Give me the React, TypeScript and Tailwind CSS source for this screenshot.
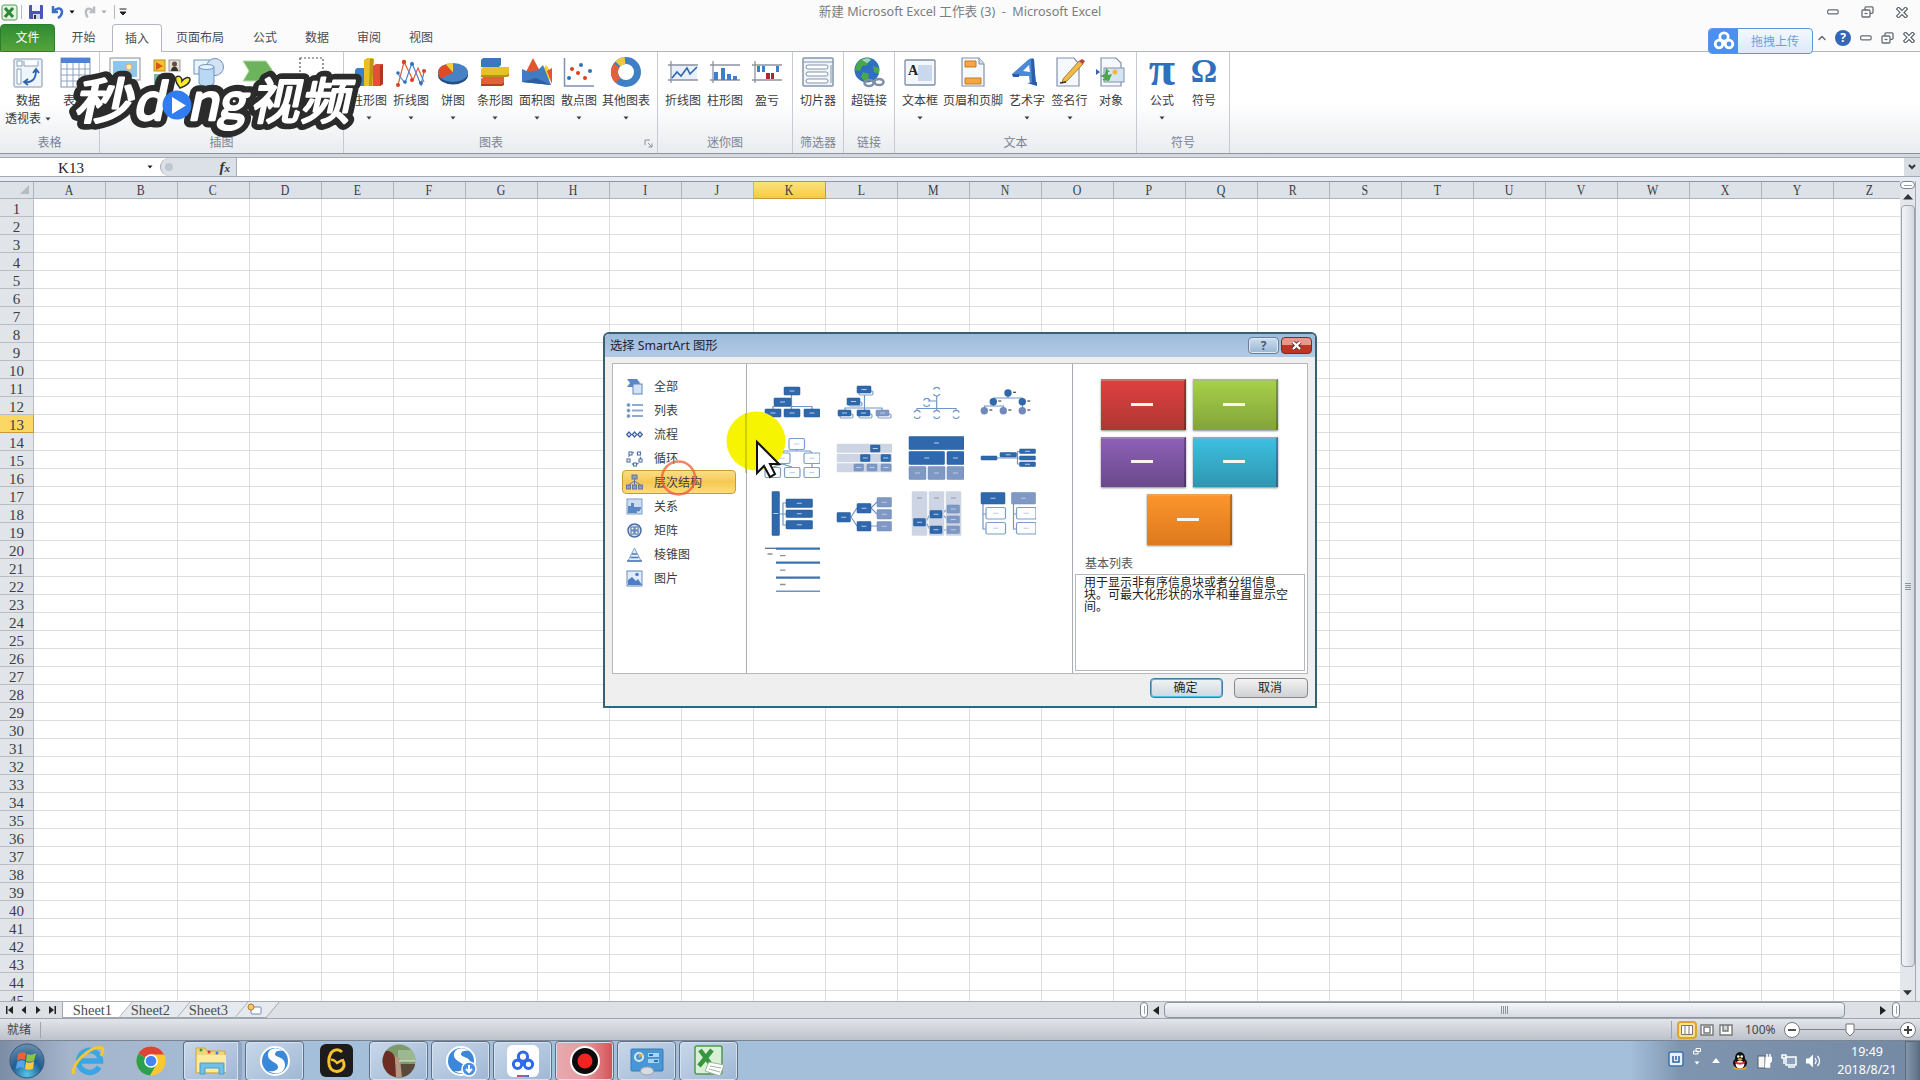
import React from 'react';
import { ChevronUp } from 'lucide-react';

const ui = "font-['Noto_Sans','Noto_Sans_CJK_SC',sans-serif]";
const serif = "font-['Liberation_Serif','Noto_Sans_CJK_SC',serif]";

const columns = 'ABCDEFGHIJKLMNOPQRSTUVWXYZ'.split('');
const rows = Array.from({ length: 45 }, (_, i) => i + 1);

/* ---------- small shared pieces ---------- */

const Caret = ({ className = '' }: { className?: string }) => (
  <svg className={className} width="6" height="4" viewBox="0 0 6 4">
    <path d="M0.5 0.5h5L3 3.5z" fill="currentColor" />
  </svg>
);

const MinIcon = () => (
  <svg width="12" height="6" viewBox="0 0 12 6" fill="#fff" stroke="#666c74" strokeWidth="1.2">
    <rect x="0.7" y="0.8" width="10.4" height="4" rx="1" />
  </svg>
);

const RestoreIcon = () => (
  <svg width="13" height="12" viewBox="0 0 13 12" fill="#fff" stroke="#666c74" strokeWidth="1.3">
    <rect x="4" y="0.8" width="8" height="6.5" rx="1" />
    <rect x="1" y="4" width="8" height="7" rx="1" />
    <path d="M3.5 7.5h3" />
  </svg>
);

const CloseIcon = () => (
  <svg width="12" height="11" viewBox="0 0 12 11">
    <path d="M2.5 2l7 7M9.5 2l-7 7" stroke="#5d636b" strokeWidth="4" strokeLinecap="square" />
    <path d="M2.5 2l7 7M9.5 2l-7 7" stroke="#fff" strokeWidth="1.7" strokeLinecap="square" />
  </svg>
);

/* ---------- ribbon icons, all on a 32x32 grid ---------- */

const icons: Record<string, React.ReactNode> = {
  pivot: (
    <g>
      <rect x="2" y="2" width="28" height="28" rx="1" fill="#eef5fb" stroke="#8293a8" />
      <rect x="5" y="4" width="5" height="5" fill="#fff" stroke="#8aa0b8" />
      <path d="M12 4v5h14V4M5 12h4v15H5z" fill="#fff" stroke="#8aa0b8" />
      <path d="M13 25c8 1 11-4 11-12m-3 3l3-4 3 4m-11 6l-4 3 4 3" fill="none" stroke="#2f63ad" strokeWidth="1.8" />
    </g>
  ),
  table: (
    <g>
      <rect x="2" y="1" width="29" height="29" fill="#fff" stroke="#8293a8" />
      <rect x="2" y="1" width="29" height="5" fill="#4f83cf" />
      <path d="M2 12h29M2 18h29M2 24h29M8 6v24M14 6v24M20 6v24M26 6v24" stroke="#8ea3c0" />
    </g>
  ),
  picture: (
    <g>
      <rect x="1" y="1" width="30" height="22" fill="#f7f9fb" stroke="#8c9097" />
      <rect x="4" y="4" width="24" height="16" fill="#8cc6ec" />
      <circle cx="20" cy="10" r="3" fill="#fff0a8" stroke="#f0a860" />
    </g>
  ),
  clipart: (
    <g>
      <rect x="3" y="3" width="11" height="11" fill="#f7c52b" stroke="#b98c20" />
      <path d="M5 5l7 4-7 4z" fill="#d9541f" />
      <rect x="18" y="3" width="11" height="11" fill="#e6dcd2" stroke="#999" />
      <circle cx="23.500" cy="7" r="2.500" fill="#6a4d3c" />
      <path d="M20 14c0-6 7-6 7 0z" fill="#333" />
      <rect x="3" y="17" width="11" height="11" fill="#77b9a0" />
    </g>
  ),
  shapes: (
    <g stroke="#6c93bf">
      <rect x="1" y="3" width="16" height="14" fill="#eaf2fa" />
      <circle cx="22" cy="10" r="8.500" fill="#d4e3f3" />
      <path d="M6 10v16c0 4 15 4 15 0V10z" fill="#b8d8f3" />
      <ellipse cx="13.500" cy="10" rx="7.500" ry="2.500" fill="#e6f3fc" />
    </g>
  ),
  smartart: <path d="M1 4h23l7 10-7 10H1l6-10z" fill="#6db35c" stroke="#b5dca8" />,
  screenshot: (
    <rect x="4" y="1" width="23" height="28" fill="none" stroke="#555" strokeWidth="1.2" strokeDasharray="2 2" />
  ),
  column: (
    <g>
      <path d="M2 13l2-2h7v18H2z" fill="#3d7fca" />
      <path d="M11 3l3-2h6v28h-9z" fill="#e9bf28" />
      <path d="M17 2h4l-2 27h-3z" fill="#bf931b" />
      <path d="M20 9l3-2h7v20l-3 2h-7z" fill="#e25137" />
      <path d="M27 9l3-2v20l-3 2z" fill="#b23520" />
    </g>
  ),
  line: (
    <g fill="none" strokeWidth="1.2">
      <path d="M3 28L9 5l9 18 5-12 6 14" stroke="#e0603c" />
      <path d="M3 17l7 9 7-20 9 22 3-13" stroke="#4d88c9" />
      <g stroke="none" fill="#d8401f">
        <circle cx="3" cy="28" r="2" /><circle cx="9" cy="5" r="2.200" /><circle cx="17" cy="23" r="2" /><circle cx="29" cy="14" r="2" />
      </g>
      <g stroke="none" fill="#3071b8">
        <circle cx="3" cy="16" r="1.800" /><circle cx="10" cy="25" r="1.800" /><circle cx="17" cy="7" r="2" /><circle cx="26" cy="26" r="2" />
      </g>
    </g>
  ),
  pie: (
    <g>
      <ellipse cx="16" cy="18" rx="15" ry="9.500" fill="#244d86" />
      <ellipse cx="16" cy="15.500" rx="15" ry="9.500" fill="#4682c4" />
      <path d="M16 15.500L4 21.500C-1 16 1 9 9 7.500z" fill="#e04a25" />
      <path d="M16 15.500L9 7.500c2-1.200 4-1.600 7-1.600z" fill="#f2cf3e" />
    </g>
  ),
  bar: (
    <g>
      <path d="M2 3l2-2h18v7l-2 2H2z" fill="#3a77bd" />
      <path d="M2 12l2-2h26v7l-2 2H2z" fill="#e8bf2c" />
      <path d="M2 18h26l2-2v3l-2 1H2z" fill="#b98f1b" />
      <path d="M2 22l2-2h21v6l-2 3H2z" fill="#e2603d" />
      <path d="M2 27h21l2-2v3l-2 1H2z" fill="#b5401f" />
    </g>
  ),
  area: (
    <g>
      <path d="M5 15l7-14 9 17z" fill="#e2552d" />
      <path d="M21 14l4-6 6 8v10z" fill="#f0cf3a" />
      <path d="M26 14l5-3v16z" fill="#e2552d" />
      <path d="M1 12l7 3 9-2 5-5 8 20-29-3z" fill="#3f7cc2" />
      <path d="M1 25l14-4 15 7z" fill="#2c5f9f" />
    </g>
  ),
  scatter: (
    <g>
      <path d="M1.500 1v28H31" fill="none" stroke="#7c93b0" strokeWidth="1.500" />
      <g fill="#d8401f"><circle cx="9" cy="12" r="2" /><circle cx="15" cy="16" r="2" /><circle cx="22" cy="21" r="2" /></g>
      <g fill="#3071b8"><circle cx="18" cy="8" r="2" /><circle cx="27" cy="14" r="2" /><circle cx="6" cy="21" r="2" /></g>
    </g>
  ),
  donut: (
    <g fill="none" strokeWidth="7">
      <circle cx="16" cy="15" r="11.500" stroke="#3f80c4" />
      <path d="M8 23.500A11.500 11.500 0 0 1 6.500 8.500" stroke="#e2603d" />
      <path d="M8 7A11.500 11.500 0 0 1 15 3.500" stroke="#f0c93c" />
    </g>
  ),
  sparkLine: (
    <g fill="none">
      <rect x="4" y="7" width="26" height="16" fill="#e8f1fb" />
      <path d="M1 8h30M1 23h30M4 4v22" stroke="#8d949e" strokeWidth="1.300" />
      <path d="M5 21l5-6 4 4 6-8 3 6 7-7" stroke="#2f62ad" strokeWidth="1.600" />
    </g>
  ),
  sparkColumn: (
    <g>
      <path d="M1 8h30M4 4v22M1 23h30" stroke="#8d949e" strokeWidth="1.300" />
      <path d="M5 15h4v8H5zM12 11h4v12h-4zM18 17h4v6h-4zM24 19h4v4h-4z" fill="#3a80cf" />
    </g>
  ),
  winLoss: (
    <g>
      <path d="M1 8h30M4 4v22M1 23h30" stroke="#8d949e" strokeWidth="1.300" />
      <path d="M6 9h3v6H6zM11 9h3v6h-3zM25 9h3v6h-3z" fill="#3a80cf" />
      <path d="M15 16h4v6h-4zM20 16h3v6h-3z" fill="#b3262c" />
    </g>
  ),
  slicer: (
    <g stroke="#8495ab">
      <rect x="1" y="1" width="30" height="28" rx="1" fill="#f0f5fa" strokeWidth="1.500" />
      <path d="M1 5h30" />
      <g fill="#fff"><rect x="4" y="8" width="22" height="4" rx="2" /><rect x="4" y="15" width="22" height="4" rx="2" /><rect x="4" y="22" width="22" height="4" rx="2" /></g>
      <path d="M29 8v18" />
    </g>
  ),
  link: (
    <g>
      <circle cx="14" cy="13" r="12.500" fill="#2f6fc0" />
      <path d="M4 6c5-6 13-6 14-4l-4 6-5 1-2 5-5-1zM10 15l6 2-1 6-3 2-4-5zM20 9l6 2v6l-5-2z" fill="#4aa84a" />
      <path d="M9 3c3-2 7-2 9 0l-4 3z" fill="#c5e9f5" opacity="0.7" />
      <g fill="none" stroke="#7d8fa6" strokeWidth="2.500"><ellipse cx="16" cy="26" rx="4.500" ry="3" /><ellipse cx="26" cy="25" rx="4.500" ry="3" /></g>
    </g>
  ),
  textbox: (
    <g>
      <rect x="1" y="3" width="30" height="25" rx="1" fill="#f4f7fb" stroke="#7d8ea5" strokeWidth="1.300" />
      <rect x="14" y="8" width="14" height="16" fill="#c9d8ec" />
      <text x="4" y="18" fontSize="14" fontFamily="Liberation Serif" fontWeight="700" fill="#222">A</text>
    </g>
  ),
  headerFooter: (
    <g>
      <path d="M5 1h17l5 6v22H5z" fill="#f5f8fc" stroke="#8192aa" strokeWidth="1.200" />
      <path d="M22 1v6h5" fill="#d4deeb" stroke="#8192aa" />
      <path d="M8 4h11v6H8zM8 21h16v6H8z" fill="#f5a643" stroke="#c97d22" />
    </g>
  ),
  wordart: (
    <g>
      <path d="M1 17L18 2l4-1 3 25-6 1-1-8H8l-4 1z" fill="#4d8ad6" />
      <path d="M12 14l6-6 1 7z" fill="#fff" />
      <path d="M20 2l3 0 2 26-4-1z" fill="#2a5eaa" />
      <path d="M1 17l7 0 0 3-6 0zM16 26l10-1v4z" fill="#2a5eaa" />
    </g>
  ),
  signature: (
    <g>
      <path d="M3 1h17l5 6v22H3z" fill="#f5f8fc" stroke="#8192aa" strokeWidth="1.200" />
      <path d="M9 22L25 4l4 3L13 24l-5 2z" fill="#f3ba45" stroke="#8b6b2a" strokeWidth="0.800" />
      <path d="M25 4l3-2 3 2-2 3z" fill="#b8433b" />
      <path d="M6 26l6-1" stroke="#333" strokeWidth="1.500" />
    </g>
  ),
  object: (
    <g>
      <path d="M6 1h15l5 5v23H6z" fill="#f5f8fc" stroke="#8192aa" strokeWidth="1.200" />
      <rect x="9" y="11" width="20" height="14" fill="#d6e4f2" stroke="#8192aa" />
      <circle cx="20" cy="15" r="2.500" fill="#f0b93c" />
      <path d="M11 11l4 4-2 0v3l4-1-3 7-7-1 3-2-5-2 5-2z" fill="#4da64a" />
      <path d="M1 12l4 3-4 3z" fill="#3c5fb0" />
    </g>
  ),
};

interface Tool {
  icon: string;
  label: string;
  second?: string;
  w: string;
  caret?: boolean;
}

interface Group {
  name: string;
  w: string;
  pad: string;
  launcher?: boolean;
  tools: Tool[];
}

const groups: Group[] = [
  {
    name: '表格', w: 'w-[100px]', pad: 'pl-0.5',
    tools: [
      { icon: 'pivot', label: '数据', second: '透视表', w: 'w-[52px]' },
      { icon: 'table', label: '表格', w: 'w-[42px]', caret: true },
    ],
  },
  {
    name: '插图', w: 'w-[244px]', pad: 'pl-1',
    tools: [
      { icon: 'picture', label: '图片', w: 'w-[42px]' },
      { icon: 'clipart', label: '剪贴画', w: 'w-[41px]' },
      { icon: 'shapes', label: '形状', w: 'w-[43px]', caret: true },
      { icon: 'smartart', label: 'SmartArt', w: 'w-[56px]' },
      { icon: 'screenshot', label: '屏幕截图', w: 'w-[52px]', caret: true },
    ],
  },
  {
    name: '图表', w: 'w-[314px]', pad: 'pl-1', launcher: true,
    tools: [
      { icon: 'column', label: '柱形图', w: 'w-[42px]', caret: true },
      { icon: 'line', label: '折线图', w: 'w-[42px]', caret: true },
      { icon: 'pie', label: '饼图', w: 'w-[42px]', caret: true },
      { icon: 'bar', label: '条形图', w: 'w-[42px]', caret: true },
      { icon: 'area', label: '面积图', w: 'w-[42px]', caret: true },
      { icon: 'scatter', label: '散点图', w: 'w-[42px]', caret: true },
      { icon: 'donut', label: '其他图表', w: 'w-[52px]', caret: true },
    ],
  },
  {
    name: '迷你图', w: 'w-[135px]', pad: 'pl-1',
    tools: [
      { icon: 'sparkLine', label: '折线图', w: 'w-[42px]' },
      { icon: 'sparkColumn', label: '柱形图', w: 'w-[42px]' },
      { icon: 'winLoss', label: '盈亏', w: 'w-[42px]' },
    ],
  },
  { name: '筛选器', w: 'w-[51px]', pad: 'pl-1', tools: [{ icon: 'slicer', label: '切片器', w: 'w-[42px]' }] },
  { name: '链接', w: 'w-[51px]', pad: 'pl-1', tools: [{ icon: 'link', label: '超链接', w: 'w-[42px]' }] },
  {
    name: '文本', w: 'w-[242px]', pad: 'pl-1',
    tools: [
      { icon: 'textbox', label: '文本框', w: 'w-[42px]', caret: true },
      { icon: 'headerFooter', label: '页眉和页脚', w: 'w-[64px]' },
      { icon: 'wordart', label: '艺术字', w: 'w-[44px]', caret: true },
      { icon: 'signature', label: '签名行', w: 'w-[41px]', caret: true },
      { icon: 'object', label: '对象', w: 'w-[42px]' },
    ],
  },
  {
    name: '符号', w: 'w-[93px]', pad: 'pl-1',
    tools: [
      { icon: 'pi', label: '公式', w: 'w-[42px]', caret: true },
      { icon: 'omega', label: '符号', w: 'w-[42px]' },
    ],
  },
];

const glyphs: Record<string, string> = { pi: 'π', omega: 'Ω' };

const ToolButton = ({ tool }: { tool: Tool }) => (
  <div className={`flex shrink-0 flex-col items-center ${tool.w}`}>
    {glyphs[tool.icon] ? (
      <span
        className={`flex h-8 items-center font-['Liberation_Serif',serif] font-bold text-[#2f6fc0] ${
          tool.icon === 'pi' ? 'pb-2 text-[48px]' : 'pb-0.5 text-[33px]'
        }`}
      >
        {glyphs[tool.icon]}
      </span>
    ) : (
      <svg width="32" height="32" viewBox="0 0 32 32">{icons[tool.icon]}</svg>
    )}
    <span className="mt-[3px] whitespace-nowrap text-xs leading-[18px]">{tool.label}</span>
    {tool.second && (
      <span className="flex items-center gap-1 whitespace-nowrap text-xs leading-[18px]">
        {tool.second}
        <Caret />
      </span>
    )}
    {tool.caret && <Caret className="mt-[6px]" />}
  </div>
);

const Ribbon = () => (
  <div className="flex h-[101px] bg-gradient-to-b from-white from-50% to-[#e9ecf0] text-[#3a3d42]">
    {groups.map((g) => (
      <div key={g.name} className={`flex shrink-0 flex-col border-r border-[#c6cbd3] ${g.w}`}>
        <div className={`flex h-[81px] pt-[5px] ${g.pad}`}>
          {g.tools.map((t) => (
            <ToolButton key={t.icon} tool={t} />
          ))}
        </div>
        <div className="flex h-5 items-center text-xs text-[#7b8492]">
          <span className="flex-1 whitespace-nowrap text-center">{g.name}</span>
          {g.launcher && (
            <svg className="mr-1 ml-[6px]" width="9" height="9" viewBox="0 0 9 9" fill="none" stroke="#8a919b">
              <path d="M1 6V1h5M4 4l4 4M8 4.500V8H4.500" />
            </svg>
          )}
        </div>
      </div>
    ))}
  </div>
);

/* ---------- title and tabs ---------- */

const TitleBar = () => (
  <div className="flex h-6 items-center">
    <div className="flex w-[759px] items-center">
      <svg className="ml-px" width="17" height="17" viewBox="0 0 17 17">
        <rect x="1" y="1" width="15" height="15" rx="2" fill="#e4f2e2" stroke="#5c9a5c" />
        <path d="M4 4l8 9M12 4l-8 9" stroke="#2c8a35" strokeWidth="3" />
      </svg>
      <span className="ml-[3px] h-3.5 w-px bg-[#b5b9bf]" />
      <svg className="ml-1.5" width="16" height="16" viewBox="0 0 16 16">
        <rect x="1" y="1" width="14" height="14" rx="1" fill="#4a55b5" />
        <rect x="4" y="1" width="8" height="6" fill="#f2f5fb" />
        <rect x="5" y="10" width="7" height="5" fill="#cfd8ee" />
        <rect x="6" y="11" width="2" height="4" fill="#333" />
      </svg>
      <svg className="ml-[7px]" width="14" height="14" viewBox="0 0 14 14" fill="none" stroke="#3c6fc5" strokeWidth="2.500">
        <path d="M3 6c3-4 8-3 8 1 0 2-1 4-4 6M2 1v6h5" />
      </svg>
      <Caret className="ml-1 text-black" />
      <svg className="ml-2" width="13" height="14" viewBox="0 0 14 14" fill="none" stroke="#b9bcc1" strokeWidth="2.500">
        <path d="M11 6C8 2 3 3 3 7c0 2 1 4 2 6M12 1v6H7" />
      </svg>
      <Caret className="ml-[5px] text-[#a6a9ae]" />
      <span className="ml-[7px] h-3.5 w-px bg-[#b5b9bf]" />
      <svg className="ml-1" width="8" height="8" viewBox="0 0 8 8">
        <path d="M0.500 1h7M1 4h6L4 7z" stroke="#222" fill="#222" />
      </svg>
    </div>
    <div className="flex w-[402px] justify-center whitespace-nowrap text-[12.6px] text-[#7b7d80]">
      新建 Microsoft Excel 工作表 (3) &nbsp;-&nbsp; Microsoft Excel
    </div>
    <div className="ml-auto flex items-center gap-[22px] pr-3">
      <MinIcon />
      <RestoreIcon />
      <CloseIcon />
    </div>
  </div>
);

const tabs = [
  { name: '开始', w: 'w-[57px]' },
  { name: '插入', w: 'w-[50px]', active: true },
  { name: '页面布局', w: 'w-[76px]' },
  { name: '公式', w: 'w-[54px]' },
  { name: '数据', w: 'w-[50px]' },
  { name: '审阅', w: 'w-[54px]' },
  { name: '视图', w: 'w-[50px]' },
];

const Cloud = ({ color, size = 22 }: { color: string; size?: number }) => (
  <svg width={size} height={size} viewBox="0 0 22 22" fill="none" stroke={color} strokeWidth="2.800">
    <circle cx="11" cy="7" r="4.200" />
    <circle cx="6" cy="14" r="3.800" />
    <circle cx="16" cy="14" r="3.800" />
  </svg>
);

const TabBar = () => (
  <div className="flex h-7 text-xs text-[#4a4d52]">
    <div className="flex w-[55px] items-center justify-center rounded-t-sm border border-[#2d7d30] bg-gradient-to-b from-[#2f8b33] to-[#55a43a] text-white">
      文件
    </div>
    {tabs.map((t) => (
      <div
        key={t.name}
        className={`flex items-center justify-center pt-px ${t.w} ${
          t.active ? 'rounded-t border border-b-0 border-[#b3b8c0] bg-white' : 'border-b border-[#b3b8c0]'
        }`}
      >
        {t.name}
      </div>
    ))}
    <div className="flex flex-1 items-center justify-end border-b border-[#b3b8c0] pr-[5px]">
      <div className="relative top-[3px] mr-[3px] flex h-[26px] w-[105px] overflow-hidden rounded border border-[#5b97e0] bg-gradient-to-b from-[#f3f8fe] to-[#dce9fa]">
        <div className="flex w-[29px] items-center justify-center bg-[#4a90f0]">
          <Cloud color="#fff" />
        </div>
        <span className="flex flex-1 items-center justify-center pt-0.5 text-xs text-[#6d9fe0]">拖拽上传</span>
      </div>
      <ChevronUp className="h-3 w-3 text-[#666c74]" strokeWidth={3} />
      <div className="mr-[9px] ml-[7px] flex h-4 w-4 items-center justify-center rounded-full bg-[#3467b5] text-xs font-bold text-white">?</div>
      <div className="flex items-center gap-[9px]">
        <MinIcon />
        <RestoreIcon />
        <CloseIcon />
      </div>
    </div>
  </div>
);

const FormulaBar = () => (
  <div className="flex h-7 flex-col border-t border-[#8e949c] bg-[#d5d9df] pt-[3px]">
    <div className="flex h-5 border-y border-[#a5abb5] bg-white">
      <div className={`flex w-40 items-center pr-1.5 text-[#222] ${serif}`}>
        <span className="flex-1 pt-0.5 pr-1 text-center text-[15px] leading-none">K13</span>
        <Caret className="w-2" />
      </div>
      <div className="flex w-[77px] items-center justify-between rounded-l-full border border-y-0 border-[#a5abb5] bg-[#dce1e8] pr-1.5 pl-1">
        <span className="h-2 w-2 rounded-full bg-[#c0c6ce]" />
        <span className="font-['Liberation_Serif',serif] text-[15px] leading-none font-bold text-[#333] italic">
          f<span className="text-[11px]">x</span>
        </span>
      </div>
      <div className="flex-1" />
      <div className="flex w-4 items-center justify-center bg-[#d8dde4]">
        <svg width="8" height="6" viewBox="0 0 8 6" fill="none" stroke="#333" strokeWidth="2"><path d="M1 1l3 3 3-3" /></svg>
      </div>
    </div>
    <div className="flex-1 bg-[#e6ebf4]" />
  </div>
);

/* ---------- sheet grid ---------- */

const Grid = () => (
  <div className="flex h-[821px] overflow-hidden bg-white">
    <div className={`flex w-[1900px] flex-col ${serif}`}>
      <div className="flex h-[18px] shrink-0 overflow-hidden border-t border-[#9298a1] bg-[#dde2e8] text-[14px] text-[#3a3d42]">
        <div className="flex w-[34px] shrink-0 items-end justify-end border-r border-b border-[#aeb4bd] p-1">
          <svg width="9" height="9" viewBox="0 0 9 9"><path d="M9 0v9H0z" fill="#b6bcc4" /></svg>
        </div>
        {columns.map((c) => (
          <div
            key={c}
            className={`flex w-[72px] shrink-0 items-center justify-center border-r border-b pt-0.5 pr-px leading-none ${
              c === 'K' ? 'border-[#c9983a] bg-gradient-to-b from-[#fae27c] to-[#f7cb3e]' : 'border-[#aeb4bd]'
            }`}
          >
            <span className="scale-x-[.85]">{c}</span>
          </div>
        ))}
      </div>
      {rows.map((r) => (
        <div key={r} className="flex h-[18px] shrink-0">
          <div
            className={`flex w-[34px] shrink-0 items-center justify-center border-r border-b pt-[3px] text-[15px] leading-none text-[#3a3d42] ${
              r === 13 ? 'border-[#c9983a] bg-[#fad863]' : 'border-[#b9bec6] bg-[#e1e5ea]'
            }`}
          >
            {r}
          </div>
          {columns.map((c) => (
            <div key={c} className="w-[72px] shrink-0 border-r border-b border-[#dcdedf]" />
          ))}
        </div>
      ))}
    </div>
    <div className="flex w-4 flex-col items-center border-r border-[#a4aab3] bg-[#e3e7ec] text-[#333]">
      <div className="mb-[5px] flex h-2 w-[15px] shrink-0 items-center justify-center rounded-sm border border-[#7b828c] bg-white">
        <span className="h-px w-2 bg-[#9aa0a8]" />
      </div>
      <svg width="10" height="6" viewBox="0 0 10 6"><path d="M0 5.500h10L5 0z" fill="#333" /></svg>
      <div className="mt-[5px] flex h-[762px] w-3.5 flex-col items-center justify-center gap-px rounded-sm border border-[#9ca3ad] bg-gradient-to-r from-[#f3f5f8] to-[#d3d8e0]">
        <span className="h-px w-1.5 bg-[#8c939d]" />
        <span className="h-px w-1.5 bg-[#8c939d]" />
        <span className="h-px w-1.5 bg-[#8c939d]" />
        <span className="h-px w-1.5 bg-[#8c939d]" />
      </div>
      <svg className="mt-[23px]" width="9" height="6" viewBox="0 0 10 6"><path d="M0 0h10L5 5.500z" fill="#333" /></svg>
    </div>
    <div className="flex-1 bg-[#e6e9ef]" />
  </div>
);

const Split = () => (
  <div className="flex h-4 w-2 items-center justify-center rounded-sm border border-[#7b828c] bg-white">
    <span className="h-2 w-px bg-[#9aa0a8]" />
  </div>
);

const SheetTabs = () => (
  <div className="flex h-4 bg-[#dde1e6] outline outline-[#a8aeb7]">
    <div className="flex w-[63px] items-center justify-around border-r border-[#a0a6af] px-0.5">
      <svg width="8" height="8" viewBox="0 0 8 8" fill="#222"><path d="M0 0h1.500v8H0zM7 0v8L2 4z" /></svg>
      <svg width="6" height="8" viewBox="0 0 6 8" fill="#222"><path d="M5 0v8L0.500 4z" /></svg>
      <svg width="6" height="8" viewBox="0 0 6 8" fill="#222"><path d="M1 0v8l4.500-4z" /></svg>
      <svg width="8" height="8" viewBox="0 0 8 8" fill="#222"><path d="M6.500 0H8v8H6.500zM1 0v8l5-4z" /></svg>
    </div>
    <div className={`flex w-[1077px] overflow-hidden text-[14.5px] leading-none text-[#4a4d52] ${serif}`}>
      <div className="-ml-4 flex w-[79px] -skew-x-[40deg] items-center justify-center border-r border-b border-[#9ea5ae] bg-white">
        <span className="skew-x-[40deg] pt-0.5 pl-3">Sheet1</span>
      </div>
      <div className="flex w-[58px] -skew-x-[40deg] items-center justify-center border-r border-b border-[#9ea5ae] bg-[#e6e9ed]">
        <span className="skew-x-[40deg] pt-0.5 pr-2.5">Sheet2</span>
      </div>
      <div className="flex w-[58px] -skew-x-[40deg] items-center justify-center border-r border-b border-[#9ea5ae] bg-[#e6e9ed]">
        <span className="skew-x-[40deg] pt-0.5 pr-2.5">Sheet3</span>
      </div>
      <div className="flex w-[31px] -skew-x-[40deg] items-center justify-center border-r border-b border-[#9ea5ae] bg-[#e6e9ed]">
        <svg className="mr-1 skew-x-[40deg]" width="16" height="14" viewBox="0 0 16 14">
          <rect x="4" y="4" width="10" height="7" rx="1" fill="#fff" stroke="#6d8ac0" />
          <circle cx="4" cy="4" r="3" fill="#f5c86a" stroke="#b37c2a" />
        </svg>
      </div>
    </div>
    <Split />
    <svg className="mx-[5px] mt-1" width="6" height="9" viewBox="0 0 6 9"><path d="M6 0v9L0 4.500z" fill="#222" /></svg>
    <div className="flex w-[681px] items-center justify-center gap-px rounded-sm border border-[#8e959f] bg-gradient-to-b from-[#f4f6f9] to-[#d5dae2] pb-px">
      <span className="h-2 w-px bg-[#8c939d]" />
      <span className="h-2 w-px bg-[#8c939d]" />
      <span className="h-2 w-px bg-[#8c939d]" />
      <span className="h-2 w-px bg-[#8c939d]" />
    </div>
    <svg className="mt-1 mr-1.5 ml-auto" width="6" height="9" viewBox="0 0 6 9"><path d="M0 0v9l6-4.500z" fill="#222" /></svg>
    <Split />
    <div className="w-[20px]" />
  </div>
);

const StatusBar = () => (
  <div className="flex h-[22px] items-center border-t border-[#9fa5ae] bg-gradient-to-b from-[#e2e5ea] to-[#bdc1c9] text-xs text-[#44474c]">
    <span className="flex w-[41px] justify-center border-r border-[#9fa5ae] pr-0.5">就绪</span>
    <div className="ml-auto flex items-center">
      <span className="mr-[5px] h-[18px] w-px bg-[#8fa3c8]" />
      <div className="flex h-[18px] w-5 items-center justify-center rounded-sm border-2 border-[#d9a72e] bg-[#fbe28a]">
        <svg width="12" height="10" viewBox="0 0 12 10" fill="#fff" stroke="#777"><path d="M0.500 0.500h11v9H0.500zM4 0v10M8 0v10" /></svg>
      </div>
      <svg className="ml-[3px]" width="14" height="12" viewBox="0 0 14 12" fill="#fff" stroke="#777" strokeWidth="1.400"><path d="M1 1h12v10H1zM4 3h6v6H4z" /></svg>
      <svg className="ml-[5px]" width="14" height="12" viewBox="0 0 14 12" fill="#fff" stroke="#777" strokeWidth="1.400"><path d="M1 1h12v10H1zM4 1v6h5V1" /></svg>
      <span className="ml-[12px] w-[33px]">100%</span>
      <span className="ml-1.5 flex h-4 w-4 items-center justify-center rounded-full border border-[#74797f] bg-white">
        <span className="h-0.5 w-2 bg-[#555]" />
      </span>
      <div className="flex w-[100px] items-center">
        <span className="h-px flex-1 bg-[#7f858d]" />
        <svg width="10" height="14" viewBox="0 0 10 14"><path d="M1 1h8v8l-4 4-4-4z" fill="#fff" stroke="#6d737b" /></svg>
        <span className="h-px flex-1 bg-[#7f858d]" />
      </div>
      <svg className="mr-[4px]" width="16" height="16" viewBox="0 0 16 16">
        <circle cx="8" cy="8" r="7.500" fill="#fff" stroke="#74797f" />
        <path d="M4 8h8M8 4v8" stroke="#444" strokeWidth="2" />
      </svg>
    </div>
  </div>
);

/* ---------- taskbar ---------- */

const Sogou = ({ download = false }: { download?: boolean }) => (
  <svg width="32" height="32" viewBox="0 0 32 32">
    <circle cx="16" cy="16" r="15" fill="#fff" />
    <circle cx="16" cy="16" r="13" fill="#3b87da" />
    <path d="M24 6C16 0 8 5 9 11c1 6 10 6 10 11 0 3-4 5-10 4 8 5 17 2 17-6 0-9-10-7-10-11 0-3 4-4 8-3z" fill="#fff" />
    {download && (
      <g>
        <circle cx="24" cy="24" r="7" fill="#4a8fe0" stroke="#fff" strokeWidth="1.500" />
        <path d="M24 20v7m-3-3l3 3 3-3" stroke="#fff" strokeWidth="2" fill="none" />
      </g>
    )}
  </svg>
);

const TaskButton = ({ children, red = false, stacked = false }: { children: React.ReactNode; red?: boolean; stacked?: boolean }) => (
  <div
    className={`flex h-10 w-[59px] shrink-0 items-center justify-center rounded-sm border border-[#5f6f85] shadow-[inset_0_0_0_1px_#d5e1ee] ${
      red ? 'bg-gradient-to-r from-[#e9a9b0] via-[#e79ba1] to-[#d34f55]' : 'bg-gradient-to-br from-[#c9d8ea] to-[#9fb7d4]'
    } ${stacked ? 'border-r-4 border-r-[#8fa5c2]' : ''}`}
  >
    {children}
  </div>
);

const Taskbar = () => (
  <div className={`flex h-10 items-center border-t border-[#7c8594] bg-[linear-gradient(90deg,#7b8ca5_0,#a5b5cc_70px,#a4bfda_300px,#a4bfda_1630px,#7f95af_1680px,#7389a4_100%)] ${ui}`}>
    <div className="flex w-[57px] justify-center pr-1">
      <svg width="36" height="36" viewBox="0 0 36 36">
        <defs>
          <radialGradient id="orb" cx="0.5" cy="0.9" r="0.9">
            <stop offset="0" stopColor="#58c4e8" />
            <stop offset="0.500" stopColor="#1f5d92" />
            <stop offset="1" stopColor="#6d8fae" />
          </radialGradient>
        </defs>
        <circle cx="18" cy="18" r="17" fill="url(#orb)" stroke="#38577a" />
        <path d="M9 11c3-2 5-2 8-1l-1 7c-3-1-5-1-8 1z" fill="#e8623a" />
        <path d="M18 11c3 1 6 1 9-1l-2 8c-3 1-5 1-8 0z" fill="#8cc63f" />
        <path d="M8 19c3-2 5-2 8-1l-1 7c-3-1-5-1-8 1z" fill="#53a6e8" />
        <path d="M17 19c3 1 6 1 8-1l-1 8c-3 1-6 1-8 0z" fill="#fbc93a" />
      </svg>
    </div>
    <div className="flex w-[62px] justify-center">
      <svg width="34" height="34" viewBox="0 0 34 34" fill="none">
        <path d="M28 23a11 11 0 1 1 1.500-6H10" stroke="#3aa6e4" strokeWidth="5.500" />
        <path d="M3 30C-2 22 20 0 31 4c2 1 0 6-1 8" stroke="#f4c733" strokeWidth="3" />
      </svg>
    </div>
    <div className="flex w-[64px] justify-center">
      <svg width="30" height="30" viewBox="0 0 30 30">
        <circle cx="15" cy="15" r="14.500" fill="#fbc831" />
        <path d="M15 15L2.500 7.500A14.500 14.500 0 0 1 28 8.500H15z" fill="#dc4437" />
        <path d="M2.500 7.500A14.500 14.500 0 0 0 14 29.500l6-10.500-5-4z" fill="#2da04f" />
        <circle cx="15" cy="15" r="6.800" fill="#fff" />
        <circle cx="15" cy="15" r="5.300" fill="#4285f4" />
      </svg>
    </div>
    <TaskButton stacked>
      <svg width="34" height="32" viewBox="0 0 34 32">
        <path d="M2 3h9l2 3h18v22H2z" fill="#f1d679" stroke="#c9a648" />
        <path d="M3 10h29v17H3z" fill="#fbeaa0" />
        <path d="M6 18h24v11h-5v-6H11v6H6z" fill="#6fc0e8" stroke="#4b9cc9" />
        <circle cx="7" cy="5" r="1.500" fill="#3a9b3f" />
        <circle cx="15" cy="7" r="1.500" fill="#d8382c" />
        <circle cx="23" cy="8" r="1.500" fill="#3d7fd0" />
      </svg>
    </TaskButton>
    <span className="w-[3px]" />
    <TaskButton><Sogou /></TaskButton>
    <div className="flex w-[65px] justify-center">
      <svg width="33" height="33" viewBox="0 0 33 33">
        <rect width="33" height="33" rx="6" fill="#1d1b1c" />
        <path d="M22 8c-3-3-8-3-11 1-3 5-3 12 0 16 4 4 11 3 13-3 0-2 0-4-1-5" fill="none" stroke="#f5c32c" strokeWidth="3" />
        <path d="M11 16c3-1 4 1 6 3 2-1 4-3 7-3" fill="none" stroke="#f5c32c" strokeWidth="2.500" />
      </svg>
    </div>
    <TaskButton>
      <svg width="34" height="34" viewBox="0 0 34 34">
        <clipPath id="avatar"><circle cx="17" cy="17" r="16.500" /></clipPath>
        <g clipPath="url(#avatar)">
          <rect width="34" height="34" fill="#7d9a6c" />
          <path d="M16 6h18v11H16z" fill="#9cb890" />
          <path d="M0 8c8-4 14 2 13 10l3 16H0z" fill="#6d2c22" />
          <path d="M16 20h18v14H16z" fill="#5b4a3c" />
          <path d="M13 12l5 2 2 20h-6z" fill="#b59783" />
          <path d="M17 17h17" stroke="#dfe8d8" />
        </g>
      </svg>
    </TaskButton>
    <span className="w-[3px]" />
    <TaskButton><Sogou download /></TaskButton>
    <span className="w-[3px]" />
    <TaskButton>
      <div className="flex h-8 w-8 flex-col items-center justify-between rounded-md bg-white pt-1">
        <Cloud color="#2f6be8" size={24} />
        <span className="h-0.5 w-3 bg-gradient-to-r from-[#e03b3b] to-[#2f6be8]" />
      </div>
    </TaskButton>
    <span className="w-[3px]" />
    <TaskButton red>
      <svg width="32" height="32" viewBox="0 0 32 32">
        <circle cx="16" cy="16" r="15" fill="#fff" />
        <circle cx="16" cy="16" r="13" fill="#0b0b0b" />
        <circle cx="16" cy="16" r="7.500" fill="#f32420" />
      </svg>
    </TaskButton>
    <span className="w-[3px]" />
    <TaskButton>
      <svg width="34" height="30" viewBox="0 0 34 30">
        <rect x="1" y="3" width="32" height="22" rx="1" fill="#4796d6" stroke="#3a7bb5" />
        <circle cx="9" cy="11" r="4" fill="none" stroke="#dbeaf5" strokeWidth="2" />
        <path d="M9 7l4 2-4 3z" fill="#f5a623" />
        <path d="M18 9h11M18 15h11" stroke="#a9d4f5" strokeWidth="4" />
        <path d="M19 9h4M24 15h4" stroke="#2c6fb0" strokeWidth="2" />
        <ellipse cx="17" cy="25" rx="6.500" ry="4" fill="#d8dce2" stroke="#9aa2ad" />
      </svg>
    </TaskButton>
    <span className="w-[3px]" />
    <TaskButton>
      <svg width="32" height="32" viewBox="0 0 32 32">
        <rect x="2" y="1" width="27" height="28" rx="2" fill="#d9efd6" stroke="#4a9a4c" strokeWidth="1.500" />
        <path d="M7 5l12 16M19 5L6 21" stroke="#36963d" strokeWidth="4.500" />
        <path d="M16 17l15 3-4 11-15-5z" fill="#fff" stroke="#9cb79d" />
        <path d="M17 21l11 2M16 24l11 3" stroke="#9cb79d" />
      </svg>
    </TaskButton>

    <div className="ml-auto flex h-10 items-center">
      <svg className="mr-[9px] -mt-1" width="16" height="16" viewBox="0 0 16 16">
        <rect x="1" y="1" width="14" height="14" rx="2" fill="#e9f1fa" stroke="#3b73b5" strokeWidth="1.500" />
        <path d="M5 5v6h6V5M8 5v4" fill="none" stroke="#2c5f9f" strokeWidth="1.500" />
      </svg>
      <div className="mr-[11px] -mt-2 flex flex-col items-center gap-1.5 text-white">
        <svg width="8" height="7" viewBox="0 0 8 7" fill="none" stroke="#fff"><path d="M3 0.500h4.500v3H3zM0.500 3H5v3H0.500z" /></svg>
        <Caret />
      </div>
      <svg className="mr-3" width="8" height="5" viewBox="0 0 8 5"><path d="M0 5h8L4 0z" fill="#fff" /></svg>
      <svg className="mr-[8px]" width="16" height="18" viewBox="0 0 16 18">
        <ellipse cx="8" cy="16" rx="6.500" ry="1.800" fill="#f0a51e" />
        <ellipse cx="8" cy="11" rx="7" ry="5.500" fill="#111" />
        <ellipse cx="8" cy="6" rx="5" ry="6" fill="#111" />
        <ellipse cx="8" cy="12.500" rx="4.300" ry="4" fill="#fff" />
        <path d="M3 9c3 2 7 2 10 0v2c-3 2-7 2-10 0z" fill="#e22b26" />
        <circle cx="6.300" cy="4.500" r="1.300" fill="#fff" />
        <circle cx="9.700" cy="4.500" r="1.300" fill="#fff" />
        <ellipse cx="8" cy="7.300" rx="2.500" ry="1" fill="#f0a51e" />
      </svg>
      <svg className="mr-[9px]" width="16" height="16" viewBox="0 0 16 16">
        <rect x="2" y="3" width="7" height="12" fill="#f4f6f8" stroke="#555f6b" />
        <path d="M11 1v3M14 1v3M9.500 4.500h6V8l-2 2v4H9" fill="#fff" stroke="#fff" strokeWidth="1.500" />
      </svg>
      <svg className="mr-[7px]" width="17" height="16" viewBox="0 0 17 16">
        <rect x="5" y="4" width="10" height="8" fill="#8ba0ba" stroke="#fff" strokeWidth="1.500" />
        <path d="M1 2h4v3H1zM3 5v6M7 14h7" stroke="#fff" strokeWidth="1.500" fill="none" />
      </svg>
      <svg width="16" height="16" viewBox="0 0 16 16">
        <path d="M1 5.500h3L8 1.500v13L4 10.500H1z" fill="#fff" />
        <path d="M10 5c1.500 2 1.500 4 0 6M12.500 3c2.500 3 2.500 7 0 10" fill="none" stroke="#fff" strokeWidth="1.200" />
      </svg>
      <div className="flex w-[84px] flex-col items-center pl-2 text-[12.5px] leading-[18px] text-white">
        <span>19:49</span>
        <span>2018/8/21</span>
      </div>
      <div className="h-10 w-[15px] border border-[#5b6a7d] bg-gradient-to-r from-[#8596ab] to-[#5d7087]" />
    </div>
  </div>
);

/* ---------- SmartArt dialog ---------- */

const categories = ['全部', '列表', '流程', '循环', '层次结构', '关系', '矩阵', '棱锥图', '图片'];

const categoryIcons: React.ReactNode[] = [
  <g key="all"><path d="M1 1h10l3 4-3 4H1l3-4z" fill="#5b87c5" /><rect x="7" y="6" width="9" height="10" fill="#d6e3f5" stroke="#5b87c5" /></g>,
  <g key="list" fill="#5f8ac4" stroke="#8fa9cf"><circle cx="2.500" cy="3" r="1.500" /><circle cx="2.500" cy="8.500" r="1.500" /><circle cx="2.500" cy="14" r="1.500" /><path d="M6 3h11M6 8.500h11M6 14h11" strokeWidth="2" /></g>,
  <g key="process" fill="#dfe9f6" stroke="#40659f" strokeWidth="1.200"><path d="M3 6l2.300 2.500L3 11 0.700 8.500zM8.500 6l2.300 2.500L8.500 11 6.200 8.500zM14 6l2.300 2.500L14 11l-2.300-2.500z" /></g>,
  <g key="cycle" fill="#fff" stroke="#5272a6" strokeWidth="1.100"><circle cx="8.500" cy="8.500" r="6" fill="none" strokeDasharray="2 3" /><rect x="3" y="2" width="3" height="3" /><rect x="11.500" y="2" width="3" height="3" /><rect x="13" y="9" width="3" height="3" /><rect x="7.500" y="13" width="3" height="3" /><rect x="1" y="9" width="3" height="3" /></g>,
  <g key="hierarchy" fill="#8f9db8" stroke="#61779f"><rect x="6" y="1" width="5" height="4" /><rect x="0.500" y="11" width="4" height="4" /><rect x="6.500" y="11" width="4" height="4" /><rect x="12.500" y="11" width="4" height="4" /><path d="M8.500 5v6M2.500 11l6-4 6 4" fill="none" /></g>,
  <g key="relation"><rect x="1" y="1" width="15" height="15" fill="#cddcf0" stroke="#7d9cc9" /><path d="M2 15V8h3V5h3v4h3v6zM9 9h6c0 6-5 6-6 0z" fill="#5b87c5" /></g>,
  <g key="matrix" stroke="#4a6fa8"><circle cx="8.500" cy="8.500" r="6.500" fill="#d6e3f5" strokeWidth="1.500" /><rect x="5" y="5" width="3" height="3" fill="#fff" /><rect x="9" y="5" width="3" height="3" fill="#fff" /><rect x="5" y="9" width="3" height="3" fill="#fff" /><rect x="9" y="9" width="3" height="3" fill="#fff" /></g>,
  <g key="pyramid"><path d="M8.500 2l6.500 13H2z" fill="#e6eefa" stroke="#7f9fce" /><path d="M6 8h5M4.500 11.500h8M1 15h15" stroke="#4f7ab8" strokeWidth="1.300" /></g>,
  <g key="picture"><rect x="1" y="1" width="15" height="15" fill="#e3edf9" stroke="#6a8cc0" /><path d="M2 15V10l4-3 4 4 2-2 4 6z" fill="#4e7fc4" /><circle cx="11" cy="4.500" r="1.800" fill="#4e7fc4" /></g>,
];

// x, y, width, height, tone: d = dark, l = light, b = band, w = outlined white
type Box = [number, number, number, number, 'd' | 'l' | 'b' | 'w'];

const tones = {
  d: { fill: '#2f68ac', stroke: '#255693' },
  l: { fill: '#7f98c4', stroke: '#6d88b8' },
  b: { fill: '#cdd4e4', stroke: '#cdd4e4' },
  w: { fill: '#fbfdff', stroke: '#7d9ec6' },
};

interface Layout {
  boxes: Box[];
  lines?: string;
}

const layouts: Layout[] = [
  { boxes: [[20, 13, 16, 8, 'd'], [10, 24, 17, 8, 'd'], [1, 35, 16, 8, 'd'], [20, 35, 16, 8, 'd'], [40, 35, 16, 8, 'd']], lines: 'M27.500 20v15M9 35v-2.500h39V35' },
  {
    boxes: [[23, 17, 14, 4, 'w'], [21, 12, 14, 7, 'd'], [13, 28, 13, 4, 'w'], [11, 24, 13, 7, 'd'], [4, 40, 13, 4, 'w'], [2, 36, 13, 6, 'd'], [23, 40, 13, 4, 'w'], [21, 36, 13, 6, 'd'], [42, 40, 13, 4, 'w'], [40, 36, 13, 6, 'l']],
    lines: 'M28.500 20v16M9 36v-2h37v2',
  },
  { boxes: [], lines: 'M28.700 22v14M9 37v-2.500h39V37M20 27h8M25.500 15.500a3.500 3.500 0 0 1 6.400 0M25.500 20a3.500 3.500 0 0 0 6.400 0M15.500 26.500a3.500 3.500 0 0 1 6.400 0M15.500 30.500a3.500 3.500 0 0 0 6.400 0M6 38.500a3.500 3.500 0 0 1 6.400 0M6 42.500a3.500 3.500 0 0 0 6.400 0M25.500 38.500a3.500 3.500 0 0 1 6.400 0M25.500 42.500a3.500 3.500 0 0 0 6.400 0M45 38.500a3.500 3.500 0 0 1 6.400 0M45 42.500a3.500 3.500 0 0 0 6.400 0' },
  { boxes: [], lines: 'M13.500 26v-2h29v2M28 20v4M4.500 34v-2h19v2M13.500 29v3M42.500 29v5' },
  {
    boxes: [[25, 8.500, 15.500, 11, 'w'], [10, 23, 16, 10.500, 'w'], [40, 23, 16, 10.500, 'w'], [1, 37.500, 15.500, 10, 'w'], [20.500, 37.500, 15.500, 10, 'w'], [40, 37.500, 15.500, 10, 'w']],
    lines: 'M18 23l2-2h26l2 2M32.500 19v2M9 37l9-3 10 3M48 34v3',
  },
  {
    boxes: [[1, 14, 55, 8.500, 'b'], [1, 24, 55, 8, 'b'], [1, 33.500, 55, 8.500, 'b'], [34.500, 15, 9.500, 7, 'd'], [24.500, 24.500, 9.500, 7, 'd'], [45, 24.500, 9.500, 7, 'd'], [18, 34, 9.500, 7, 'l'], [31, 34, 10, 7, 'l'], [45, 34, 10, 7, 'l']],
  },
  {
    boxes: [[1, 6.500, 55, 13, 'd'], [1, 21.500, 35.500, 13, 'd'], [39, 21.500, 17, 13, 'd'], [1, 36.500, 17, 13, 'l'], [20, 36.500, 17, 13, 'l'], [39, 36.500, 17, 13, 'l']],
  },
  { boxes: [[1, 26, 16, 4, 'd'], [20, 22.500, 16.500, 4.500, 'd'], [39.500, 19, 16, 4.500, 'd'], [39.500, 26, 16, 4, 'd'], [39.500, 32, 16, 4.500, 'd']], lines: 'M17 28h22M37.500 21.500v12.500h2M37.500 21.500h2' },
  { boxes: [[8, 5.500, 7.500, 44, 'd'], [22, 13, 26.500, 8.500, 'd'], [22, 24, 26.500, 7.500, 'd'], [22, 34.500, 26.500, 8.500, 'd']], lines: 'M16 28h6M22 17h-3v22h3' },
  {
    boxes: [[1, 26.500, 13.500, 9.500, 'd'], [21, 17.500, 14, 9.500, 'd'], [21, 35.500, 14, 9.500, 'd'], [41, 11.500, 14.500, 9.500, 'l'], [41, 23.500, 14.500, 9.500, 'l'], [41, 35.500, 14.500, 9.500, 'l']],
    lines: 'M15 31l6-9M15 31l6 9M35 22l6-6M35 22l6 6M35 40h6',
  },
  {
    boxes: [[4, 5.500, 15, 44, 'b'], [21, 5.500, 15, 44, 'b'], [38, 5.500, 15, 44, 'b'], [5.500, 32.500, 12, 7.500, 'd'], [22, 24.500, 12, 7.500, 'd'], [22, 40, 12, 7.500, 'd'], [39, 19, 12.500, 8, 'l'], [39, 30, 12.500, 7, 'l'], [39, 40, 12.500, 7.500, 'l']],
    lines: 'M18 36l4-8M18 36l4 8M34 28l5-5M34 28l5 5M34 44h5',
  },
  { boxes: [[1, 6.500, 24, 11.500, 'd'], [31.500, 6.500, 24, 11.500, 'l'], [6, 21.500, 19.500, 11.500, 'w'], [6, 36.500, 19.500, 11.500, 'w'], [36.500, 21.500, 19.500, 11.500, 'w'], [36.500, 36.500, 19.500, 11.500, 'w']], lines: 'M3 18v25h3M3 28h3M33.500 18v25h3M33.500 28h3' },
  { boxes: [] },
];

const Thumb = ({ index }: { index: number }) => (
  <svg width="56" height="56" viewBox="0 0 56 56">
    <path d={layouts[index].lines} fill="none" stroke="#6f96c6" strokeWidth="1.200" />
    {layouts[index].boxes.map(([x, y, w, h, tone], i) => (
      <g key={i}>
        <rect x={x} y={y} width={w} height={h} rx={tone === 'w' ? 1.5 : 0.8} {...tones[tone]} strokeWidth={tone === 'w' ? 1.2 : 0.5} />
        {tone !== 'b' && h > 4 && (
          <path d={`M${x + w / 2 - 2.5} ${y + h / 2}h5`} stroke={tone === 'w' ? '#c3ccd8' : '#b9cde8'} />
        )}
      </g>
    ))}
    {index === 3 &&
      [[28, 19], [13.300, 27.700], [42.300, 27.700], [4.300, 36.700], [23.300, 36.700], [42.300, 36.700]].map(([x, y], i) => (
        <g key={i}>
          <circle cx={x} cy={y} r="3.700" fill={i > 2 ? '#7189b8' : '#2f68ac'} />
          <path d={`M${x + 5} ${y - 0.7}h3`} stroke="#444" strokeWidth="1.200" />
        </g>
      ))}
    {index === 10 && <path d="M9 12h5M26 12h5M43 12h5" stroke="#8e99ad" />}
    {index === 12 && (
      <g>
        <path d="M1 6.300h11" stroke="#56708f" strokeWidth="1.300" />
        <path d="M12 6.700h44M12 20.700h44M12 35.700h44" stroke="#3d72b3" strokeWidth="2.200" />
        <path d="M12 49.300h44" stroke="#6d93c0" strokeWidth="1.500" />
        <path d="M3.500 12h5M16 13.700h5.500M16 28.200h5.500M16 42.500h5.500" stroke="#8c9096" strokeWidth="1.300" />
      </g>
    )}
  </svg>
);

const Tile = ({ color }: { color: string }) => (
  <div className={`flex h-[50.5px] w-[85px] items-center justify-center border-t-2 border-r-2 border-t-white/30 border-r-black/25 pb-0.5 shadow-[0_1px_2px_#0007] ${color}`}>
    <span className="h-[3px] w-[22px] bg-[#f6f6ee]" />
  </div>
);

const SmartArtDialog = () => (
  <div className="absolute top-[332px] left-[603px] flex h-[376px] w-[714px] flex-col rounded-t-md border-2 border-[#39606f] border-b-[#2a6b83] bg-[#efefef]">
    <div className="flex h-[23px] shrink-0 items-center rounded-t bg-gradient-to-b from-[#9dbbdc] to-[#b2cae5] pr-[3px] pl-[5px]">
      <span className="pt-0.5 text-[12.3px] text-[#1c2530]">选择 SmartArt 图形</span>
      <div className="ml-auto flex h-[17px] w-[31px] items-center justify-center rounded-sm border border-[#64809e] bg-gradient-to-b from-[#cfdff0] to-[#9ab6d3] text-xs font-bold text-[#4d5c6c] shadow-[inset_0_0_0_1px_#dfeaf5]">?</div>
      <div className="ml-0.5 flex h-[17px] w-[31px] items-center justify-center rounded-sm border border-[#7c2b23] bg-gradient-to-b from-[#e5988b] from-45% to-[#bd3524] to-50%">
        <svg width="11" height="9" viewBox="0 0 11 9">
          <path d="M2 1l7 7M9 1L2 8" stroke="#4d3330" strokeWidth="4" />
          <path d="M2 1l7 7M9 1L2 8" stroke="#fff" strokeWidth="2.400" />
        </svg>
      </div>
    </div>

    <div className="mt-1.5 mr-[7px] ml-[7px] flex h-[311px] shrink-0 border border-[#b4b7bc] bg-white">
      <div className="flex w-[134px] shrink-0 flex-col border-r border-[#a9adb3] pt-[10px] pl-[9px]">
        {categories.map((name, i) => (
          <div
            key={name}
            className={`flex h-6 w-[114px] shrink-0 items-center rounded-sm border pl-[3px] text-xs text-[#3a3d42] ${
              name === '层次结构' ? 'border-[#c99b35] bg-gradient-to-b from-[#fadf86] via-[#f6c853] to-[#fbdf77]' : 'border-transparent'
            }`}
          >
            <svg width="17" height="17" viewBox="0 0 17 17">{categoryIcons[i]}</svg>
            <span className="ml-[11px] pt-px">{name}</span>
          </div>
        ))}
      </div>

      <div className="grid w-[326px] shrink-0 grid-cols-[repeat(4,72px)] grid-rows-[repeat(4,56px)] justify-items-center border-r border-[#a9adb3] pt-2.5 pl-[9px]">
        {layouts.map((_, i) => (
          <Thumb key={i} index={i} />
        ))}
      </div>

      <div className="flex flex-1 flex-col px-[2px] pb-[2px]">
        <div className="flex flex-wrap justify-center gap-[7px] pt-[15px] pr-0.5">
          <Tile color="bg-gradient-to-b from-[#dd4040] to-[#b03734]" />
          <Tile color="bg-gradient-to-b from-[#a6d04a] to-[#83a43a]" />
          <Tile color="bg-gradient-to-b from-[#8c60b6] to-[#6b498c]" />
          <Tile color="bg-gradient-to-b from-[#3dbfe0] to-[#2f96b0]" />
          <Tile color="bg-gradient-to-b from-[#fb942c] to-[#de7a1c]" />
        </div>
        <p className="mt-[10px] h-[19px] pl-[10px] text-xs leading-[18px] text-[#55585e]">基本列表</p>
        <div className="flex-1 border border-[#b4b7bc] pt-[2px] pl-[8px]">
          <p className="w-[208px] text-xs leading-[12px] text-[#222]">用于显示非有序信息块或者分组信息块。可最大化形状的水平和垂直显示空间。</p>
        </div>
      </div>
    </div>

    <div className="mt-1 mr-[7px] flex justify-end gap-[11px] text-xs text-[#1e1e1e]">
      <div className="flex h-5 w-[73px] items-center justify-center rounded-sm border border-[#3b7f9c] bg-gradient-to-b from-[#f2f4f6] to-[#cbd8df] pr-0.5 shadow-[inset_0_0_0_1px_#48c1ea]">确定</div>
      <div className="flex h-5 w-[74px] items-center justify-center rounded-sm border border-[#84878b] bg-gradient-to-b from-[#f3f3f3] to-[#d0d1d3] pr-0.5">取消</div>
    </div>
  </div>
);

/* ---------- things drawn over the window ---------- */

const Watermark = () => (
  <svg className="absolute top-[63px] left-[68px]" width="300" height="80" viewBox="0 0 300 80">
    {['#2b2b2b', '#ffffff'].map((color, i) => (
      <g key={color} fill={color} stroke={color} strokeLinejoin="round" transform="skewX(-12)">
        <g fontFamily="Noto Sans CJK SC" fontWeight="400" fontSize="49" strokeWidth={i === 0 ? 14 : 2.5}>
          <text x="18" y="56" textLength="58" lengthAdjust="spacingAndGlyphs">秒</text>
          <text x="194" y="56">视</text>
          <text x="244" y="56">频</text>
        </g>
        <g fontFamily="Lato" fontWeight="400" fontSize="54" strokeWidth={i === 0 ? 15 : 2.5}>
          <text x="77" y="57">d</text>
          <text x="132" y="57">n</text>
          <text x="161" y="57">g</text>
        </g>
      </g>
    ))}
    <circle cx="109" cy="42" r="14.500" fill="#2f7df0" />
    <path d="M104 34v17l14-8.500z" fill="#fff" />
    <path d="M108 14c3-2 6 0 6 4 3-4 8-5 8-1-1 5-7 7-10 8-2-3-6-7-4-11z" fill="#ffe92b" stroke="#2b2b2b" strokeWidth="1.500" />
  </svg>
);

const Pointer = () => (
  <svg className="absolute top-[405px] left-[655px]" width="135" height="105" viewBox="0 0 135 105">
    <circle cx="23.500" cy="73" r="16.500" fill="none" stroke="#ee5a3c" strokeWidth="2.500" opacity="0.75" />
    <g>
      <circle cx="101" cy="36" r="29.500" fill="#f6f400" />
      <path d="M91 8v60" stroke="#8a8a00" opacity="0.7" />
      <path d="M102 37v31l7-7 6 11 5-3-5-10h9z" fill="#fff" stroke="#111" strokeWidth="2" />
    </g>
  </svg>
);

const App: React.FC = () => {
  return (
    <div className={`relative flex h-[1080px] w-[1920px] flex-col overflow-hidden bg-[#fbfbfc] ${ui}`}>
      <TitleBar />
      <TabBar />
      <Ribbon />
      <FormulaBar />
      <Grid />
      <SheetTabs />
      <StatusBar />
      <Taskbar />
      <SmartArtDialog />
      <Watermark />
      <Pointer />
    </div>
  );
};

export default App;
